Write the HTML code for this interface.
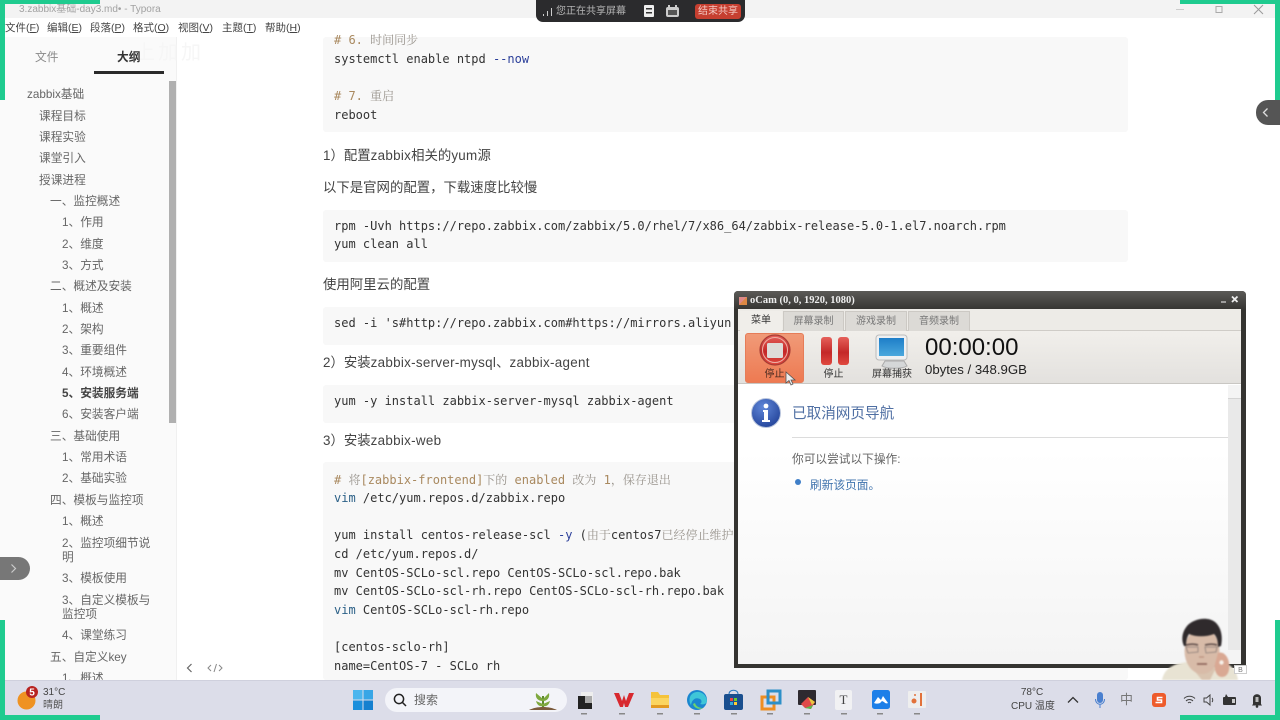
<!DOCTYPE html>
<html lang="zh"><head><meta charset="utf-8"><title>Typora</title>
<style>
*{box-sizing:border-box;margin:0;padding:0}
html{width:1280px;height:720px;overflow:hidden;background:#fff}
body{width:1280px;height:720px;overflow:hidden;background:#fff;position:relative;font-family:"Liberation Sans","Noto Sans CJK SC",sans-serif;color:#555;filter:blur(.35px)}
div,span.t{white-space:nowrap}
.t{position:absolute;line-height:18px;height:18px}
#side .t{font-size:11.7px;color:#666;margin-top:1px}
#menu .t{font-size:10.5px;color:#444}
#menu u{text-decoration:underline}
.c{position:absolute;left:334px;font:12px/18px "DejaVu Sans Mono","Noto Serif CJK SC",monospace;color:#333;height:18px}
.cm{color:#a9895f}
.cg{color:#9a958e}
.b{color:#2b3f9a}
.vb{color:#2a5f86}
.blk{position:absolute;left:323px;width:805px;background:#f8f8f8;border-radius:3px}
.p{position:absolute;left:323px;font-size:13.4px;line-height:18px;color:#444;margin-top:1px}
.p i{font-style:normal;letter-spacing:.3px}
.g{position:absolute;background:#1fcb8f;z-index:20}
.tab{position:absolute;top:311px;height:20px;background:#dcdad6;border:1px solid #ccc9c4;border-bottom:0;font-size:10px;line-height:20px;text-align:center;color:#777}
svg{position:absolute;overflow:visible}
</style></head><body>

<!-- title bar -->
<div style="position:absolute;left:0;top:0;width:1280px;height:18px;background:#f3f3f3"></div>
<div class="t" style="left:19px;top:1px;font-size:10px;color:#a2a2a2">3.zabbix基础-day3.md• - Typora</div>
<svg style="left:1176px;top:4px" width="96" height="12"><path d="M0 5.500h8" stroke="#ccc"/><rect x="40" y="2.500" width="6" height="6" fill="none" stroke="#aaa"/><path d="M78 1l9 9M87 1l-9 9" stroke="#999" fill="none"/></svg>

<!-- menu -->
<div id="menu">
<div class="t" style="left:5px;top:19px">文件(<u>F</u>)</div>
<div class="t" style="left:47px;top:19px">编辑(<u>E</u>)</div>
<div class="t" style="left:90px;top:19px">段落(<u>P</u>)</div>
<div class="t" style="left:133px;top:19px">格式(<u>O</u>)</div>
<div class="t" style="left:178px;top:19px">视图(<u>V</u>)</div>
<div class="t" style="left:222px;top:19px">主题(<u>T</u>)</div>
<div class="t" style="left:265px;top:19px">帮助(<u>H</u>)</div>
</div>

<!-- sidebar -->
<div style="position:absolute;left:0;top:37px;width:177px;height:643px;background:#fafafa;border-right:1px solid #f0f0f0"></div>
<div class="t" style="left:135px;top:41px;width:95px;height:24px;font-size:20px;line-height:24px;color:#f6f6f6;letter-spacing:3px;overflow:hidden">上加加</div>
<div id="side">
<div class="t" style="left:35px;top:48px;color:#8a8a8a">文件</div>
<div class="t" style="left:117px;top:48px;color:#333;font-weight:bold">大纲</div>
<div style="position:absolute;left:94px;top:71px;width:70px;height:3px;background:#2a2a2a"></div>
<div style="position:absolute;left:169px;top:81px;width:7px;height:342px;background:#b0b0b0"></div>
<div class="t" style="left:27px;top:85px">zabbix基础</div>
<div class="t" style="left:39px;top:107px">课程目标</div>
<div class="t" style="left:39px;top:128px">课程实验</div>
<div class="t" style="left:39px;top:149px">课堂引入</div>
<div class="t" style="left:39px;top:171px">授课进程</div>
<div class="t" style="left:50px;top:192px">一、监控概述</div>
<div class="t" style="left:62px;top:213px">1、作用</div>
<div class="t" style="left:62px;top:235px">2、维度</div>
<div class="t" style="left:62px;top:256px">3、方式</div>
<div class="t" style="left:50px;top:277px">二、概述及安装</div>
<div class="t" style="left:62px;top:299px">1、概述</div>
<div class="t" style="left:62px;top:320px">2、架构</div>
<div class="t" style="left:62px;top:341px">3、重要组件</div>
<div class="t" style="left:62px;top:363px">4、环境概述</div>
<div class="t" style="left:62px;top:384px;font-weight:bold;color:#444">5、安装服务端</div>
<div class="t" style="left:62px;top:405px">6、安装客户端</div>
<div class="t" style="left:50px;top:427px">三、基础使用</div>
<div class="t" style="left:62px;top:448px">1、常用术语</div>
<div class="t" style="left:62px;top:469px">2、基础实验</div>
<div class="t" style="left:50px;top:491px">四、模板与监控项</div>
<div class="t" style="left:62px;top:512px">1、概述</div>
<div class="t" style="left:62px;top:534px">2、监控项细节说</div>
<div class="t" style="left:62px;top:548px">明</div>
<div class="t" style="left:62px;top:569px">3、模板使用</div>
<div class="t" style="left:62px;top:591px">3、自定义模板与</div>
<div class="t" style="left:62px;top:605px">监控项</div>
<div class="t" style="left:62px;top:626px">4、课堂练习</div>
<div class="t" style="left:50px;top:648px">五、自定义key</div>
<div class="t" style="left:62px;top:669px;height:10px;overflow:hidden">1、概述</div>
</div>
<div style="position:absolute;left:0;top:557px;width:30px;height:23px;background:#777;border-radius:0 12px 12px 0"></div>
<svg style="left:0;top:557px" width="30" height="23"><path d="M11.500 7.500l4 4-4 4" stroke="#ccc" stroke-width="1.200" fill="none"/></svg>
<svg style="left:182px;top:662px" width="50" height="12"><path d="M9.500 2l-4 4 4 4" stroke="#666" stroke-width="1.200" fill="none"/><path d="M29 3l-3 3 3 3M37 3l3 3-3 3M34.500 2l-2.500 8" stroke="#888" fill="none"/></svg>

<!-- main content -->
<div class="blk" style="top:37px;height:95px"></div>
<div class="c cm" style="top:31px">#&nbsp;6.&nbsp;<span class="cg">时间同步</span></div>
<div class="c" style="top:50px">systemctl enable ntpd <span class="b">--now</span></div>
<div class="c cm" style="top:87px">#&nbsp;7.&nbsp;<span class="cg">重启</span></div>
<div class="c" style="top:106px">reboot</div>
<div class="p" style="top:146px">1）配置<i>zabbix</i>相关的<i>yum</i>源</div>
<div class="p" style="top:178px">以下是官网的配置，下载速度比较慢</div>
<div class="blk" style="top:210px;height:52px"></div>
<div class="c" style="top:217px">rpm -Uvh https://repo.zabbix.com/zabbix/5.0/rhel/7/x86_64/zabbix-release-5.0-1.el7.noarch.rpm</div>
<div class="c" style="top:235px">yum clean all</div>
<div class="p" style="top:275px">使用阿里云的配置</div>
<div class="blk" style="top:307px;height:38px"></div>
<div class="c" style="top:314px">sed -i 's#http://repo.zabbix.com#https://mirrors.aliyun.com/zabbix#' /etc/yum.repos.d/zabbix.repo</div>
<div class="p" style="top:353px">2）安装<i>zabbix-server-mysql</i>、<i>zabbix-agent</i></div>
<div class="blk" style="top:385px;height:38px"></div>
<div class="c" style="top:392px">yum -y install zabbix-server-mysql zabbix-agent</div>
<div class="p" style="top:431px">3）安装<i>zabbix-web</i></div>
<div class="blk" style="top:462px;height:218px"></div>
<div class="c cm" style="top:471px">#&nbsp;<span class="cg">将</span>[zabbix-frontend]<span class="cg">下的</span>&nbsp;enabled&nbsp;<span class="cg">改为</span>&nbsp;1<span class="cg">，保存退出</span></div>
<div class="c" style="top:489px"><span class="vb">vim</span> /etc/yum.repos.d/zabbix.repo</div>
<div class="c" style="top:526px">yum install centos-release-scl <span class="b">-y</span> (<span class="cg">由于</span>centos7<span class="cg">已经停止维护，需要更换源</span>)</div>
<div class="c" style="top:545px">cd /etc/yum.repos.d/</div>
<div class="c" style="top:564px">mv CentOS-SCLo-scl.repo CentOS-SCLo-scl.repo.bak</div>
<div class="c" style="top:582px">mv CentOS-SCLo-scl-rh.repo CentOS-SCLo-scl-rh.repo.bak</div>
<div class="c" style="top:601px"><span class="vb">vim</span> CentOS-SCLo-scl-rh.repo</div>
<div class="c" style="top:638px">[centos-sclo-rh]</div>
<div class="c" style="top:657px">name=CentOS-7 - SCLo rh</div>

<!-- right bubble -->
<div style="position:absolute;left:1256px;top:100px;width:24px;height:25px;background:#555;border-radius:12px 0 0 12px"></div>
<svg style="left:1256px;top:100px" width="24" height="25"><path d="M11.500 8.500l-4 4 4 4" stroke="#ddd" stroke-width="1.300" fill="none"/></svg>

<!-- share bar -->
<div style="position:absolute;left:536px;top:0;width:209px;height:22px;background:#2b2b2d;border-radius:0 0 7px 7px"></div>
<svg style="left:542px;top:7px" width="14" height="10"><path d="M1.500 9V7M5.500 9V4M9.500 9V1" stroke="#ccc" fill="none"/></svg>
<div class="t" style="left:556px;top:3px;font-size:10px;color:#b5b5b5">您正在共享屏幕</div>
<svg style="left:643px;top:4px" width="40" height="14"><rect x="1" y="1" width="10" height="12" rx="1" fill="#eee"/><rect x="3" y="4" width="6" height="1.500" fill="#333"/><rect x="3" y="8" width="6" height="1.500" fill="#333"/><rect x="23" y="3" width="13" height="10" rx="2" fill="#ccc"/><rect x="25" y="1" width="2" height="3" fill="#ccc"/><rect x="32" y="1" width="2" height="3" fill="#ccc"/><rect x="25" y="6" width="9" height="5" fill="#555"/></svg>
<div style="position:absolute;left:695px;top:4px;width:46px;height:15px;background:#c63f30;border-radius:3px;color:#f3c9c3;font-size:10px;line-height:15px;text-align:center">结束共享</div>

<!-- oCam window -->
<div style="position:absolute;left:734px;top:291px;width:512px;height:377px;background:#353431;border-radius:4px 4px 0 0;z-index:3">
<div style="position:absolute;left:0;top:0;width:512px;height:18px;background:linear-gradient(#5b5a57,#373633);border-radius:4px 4px 0 0"></div>
</div>
<div style="position:absolute;left:738px;top:309px;width:503px;height:355px;background:linear-gradient(#fff 40%,#f4f4f4);z-index:3"></div>
<div style="position:absolute;left:738px;top:309px;width:503px;height:22px;background:#edebe7;border-bottom:1px solid #cfccc7;z-index:3"></div>
<div style="position:absolute;left:738px;top:331px;width:503px;height:53px;background:linear-gradient(#f1efeb,#e3e1de);border-bottom:1px solid #c9c7c3;z-index:3"></div>
<div style="z-index:4;position:absolute;left:0;top:0;width:1280px;height:720px">
<div style="position:absolute;left:739px;top:297px;width:8px;height:8px;background:linear-gradient(135deg,#d88 50%,#d84 50%)"></div>
<div class="t" style="left:750px;top:292px;font:bold 10.500px/18px 'Liberation Serif',serif;color:#eee">oCam (0, 0, 1920, 1080)</div>
<svg style="left:1218px;top:295px" width="22" height="10"><path d="M3 7h5" stroke="#bbb" stroke-width="1.500"/><path d="M14 1.500l5.500 5.500M19.500 1.500l-5.500 5.500" stroke="#eee" stroke-width="1.800" fill="none"/></svg>
<div class="t" style="left:740px;top:311px;width:42px;height:20px;text-align:center;font-size:10px;line-height:20px;color:#333;background:#f0eeea">菜单</div>
<div class="tab" style="left:783px;width:61px">屏幕录制</div>
<div class="tab" style="left:845px;width:62px">游戏录制</div>
<div class="tab" style="left:908px;width:62px">音频录制</div>
<div style="position:absolute;left:745px;top:333px;width:59px;height:50px;border-radius:3px;background:linear-gradient(#f09a78,#ee7a52);border:1px solid #e67c58"></div>
<svg style="left:745px;top:333px" width="260" height="50">
<defs><linearGradient id="rd" x1="0" y1="0" x2="0" y2="1"><stop offset="0" stop-color="#e5605a"/><stop offset=".55" stop-color="#c42828"/><stop offset="1" stop-color="#e0493f"/></linearGradient>
<linearGradient id="sc" x1="0" y1="0" x2="0" y2="1"><stop offset="0" stop-color="#1e7ec8"/><stop offset="1" stop-color="#4aa8dd"/></linearGradient></defs>
<circle cx="30" cy="17" r="15" fill="url(#rd)" stroke="#a83c34" stroke-width="1.200"/>
<circle cx="30" cy="17" r="12.500" fill="none" stroke="#efb0a4"/>
<rect x="22" y="10" width="16" height="15" rx="1.500" fill="#dedcd8"/>
<rect x="76" y="4" width="11" height="28" rx="3" fill="url(#rd)"/>
<rect x="93" y="4" width="11" height="28" rx="3" fill="url(#rd)"/>
<rect x="131" y="2" width="31" height="25" rx="3" fill="#eef0f2" stroke="#bbb"/>
<rect x="134" y="5" width="25" height="18" fill="url(#sc)"/>
<path d="M140 28h19l3 5c-5 3-20 3-25 0z" fill="#d5d7d8" stroke="#aaa"/>
</svg>
<div class="t" style="left:745px;top:366px;width:59px;text-align:center;font-size:10px;color:#4a2a20">停止</div>
<div class="t" style="left:804px;top:366px;width:59px;text-align:center;font-size:10px;color:#333">停止</div>
<div class="t" style="left:862px;top:366px;width:60px;text-align:center;font-size:10px;color:#333">屏幕捕获</div>
<div class="t" style="left:925px;top:334px;font-size:24px;line-height:28px;height:28px;color:#111">00:00:00</div>
<div class="t" style="left:925px;top:361px;font-size:13.200px;color:#222">0bytes / 348.9GB</div>
<svg style="left:784px;top:371px" width="12" height="16"><path d="M2 1v11l3-2.500 2 4.500 2-1-2-4h4z" fill="#eee" stroke="#555" stroke-width=".8"/></svg>
<svg style="left:751px;top:398px" width="30" height="30"><defs><radialGradient id="ic" cx=".4" cy=".3" r=".8"><stop offset="0" stop-color="#5f86d8"/><stop offset="1" stop-color="#1f3f95"/></radialGradient></defs><circle cx="15" cy="15" r="14.500" fill="url(#ic)" stroke="#b8c4dc"/><circle cx="15" cy="8" r="2.400" fill="#fff"/><path d="M12 12h5v10h2v2h-8v-2h2v-8h-1z" fill="#fff"/></svg>
<div class="t" style="left:792px;top:405px;font-size:14.600px;color:#4f6fa3">已取消网页导航</div>
<div style="position:absolute;left:792px;top:437px;width:436px;height:1px;background:#dcdcdc"></div>
<div class="t" style="left:792px;top:451px;font-size:11.700px;color:#666">你可以尝试以下操作:</div>
<div style="position:absolute;left:795px;top:479px;width:6px;height:6px;border-radius:50%;background:#3f7fc8"></div>
<div class="t" style="left:810px;top:477px;font-size:11.700px;color:#3f73ad">刷新该页面。</div>
<div style="position:absolute;left:1228px;top:385px;width:13px;height:279px;background:#f4f4f4"></div>
<div style="position:absolute;left:1228px;top:398px;width:13px;height:252px;background:#e9e9e9;border-top:1px solid #d4d4d4"></div>
</div>

<!-- webcam -->
<svg style="left:1150px;top:610px;z-index:5;filter:blur(.8px)" width="110" height="70" viewBox="0 0 110 70">
<path d="M12 70c2-9 7-13 15-16l14-3 18 8 16-6c8 3 12 9 13 17z" fill="#e8e3d3"/>
<path d="M42 58l10 12h8l6-12z" fill="#d9c4b0"/>
<ellipse cx="52" cy="41" rx="17.500" ry="23" fill="#d8bba8"/>
<path d="M34 36c-3-6-2-14 3-20 6-7 20-10 28-4 6 5 8 14 6 24l-3 1c0-6-1-10-4-13-8 3-18 3-25 0-2 3-3 7-3 12z" fill="#2f2a2c"/>
<path d="M36 35c4-1 9-1 12 0M55 35c4-1 9-1 12 0" stroke="#5d4b48" stroke-width="1.500" fill="none"/>
<path d="M36 37l12 0 0 5-10 1zM55 37h12l-1 5-10 1z" fill="none" stroke="#8a7d78" stroke-width=".8"/>
<path d="M47 54h10" stroke="#8c6257" stroke-width="1.600"/>
<path d="M49 47l5 0" stroke="#b98f7c" stroke-width="1.200"/>
<path d="M68 43c5-2 10 3 11 10s-1 14-7 14c-5 0-8-6-7-13z" fill="#d9a893"/>
<circle cx="71.500" cy="52.500" r="2.200" fill="#f6f1ea"/>
</svg>
<div class="t" style="left:1234px;top:665px;width:13px;height:9px;font-size:7px;line-height:9px;color:#777;background:#fff;border:1px solid #ccc;z-index:5;text-align:center">B</div>

<!-- taskbar -->
<div style="position:absolute;left:0;top:680px;width:1280px;height:40px;background:#dcdde9;border-top:1px solid #cfd0dd;z-index:6"></div>
<div style="position:absolute;left:0;top:0;width:1280px;height:720px;z-index:7">
<svg style="left:17px;top:684px" width="24" height="28"><circle cx="9.500" cy="16.500" r="9" fill="#ef9222"/><circle cx="15" cy="8" r="6" fill="#b82320"/><text x="15" y="11.500" font-size="10" font-weight="bold" text-anchor="middle" fill="#fff" font-family="Liberation Sans">5</text></svg>
<div class="t" style="left:43px;top:684px;font-size:10px;color:#444">31°C</div>
<div class="t" style="left:43px;top:697px;font-size:10px;color:#555">晴朗</div>
<svg style="left:353px;top:690px" width="20" height="20"><rect x="0" y="0" width="9.500" height="9.500" fill="#4cb6ee"/><rect x="10.500" y="0" width="9.500" height="9.500" fill="#38a6e6"/><rect x="0" y="10.500" width="9.500" height="9.500" fill="#1b8fdc"/><rect x="10.500" y="10.500" width="9.500" height="9.500" fill="#1580cf"/></svg>
<div style="position:absolute;left:385px;top:688px;width:182px;height:24px;border-radius:12px;background:#f3f4f9"></div>
<svg style="left:393px;top:693px" width="14" height="14"><circle cx="6" cy="6" r="4.600" fill="none" stroke="#222" stroke-width="1.500"/><path d="M9.500 9.500l3.500 3.500" stroke="#222" stroke-width="1.500"/></svg>
<div class="t" style="left:414px;top:691px;font-size:12px;color:#666">搜索</div>
<svg style="left:528px;top:690px" width="30" height="22"><path d="M15 17V6" stroke="#5c8a2e" stroke-width="2"/><path d="M15 9L8 3c-1 5 2 8 7 8zM15 9l6-6c1 5-2 8-6 8zM15 14l-7-3c1 4 4 6 7 5zM15 14l7-3c-1 4-4 6-7 5z" fill="#7ea83e"/><path d="M1 20c8-4 20-4 28 0z" fill="#7a5a3c"/></svg>
<svg style="left:577px;top:691px" width="16" height="18"><rect x="4" y="1" width="12" height="12" fill="#eee"/><rect x="1" y="5" width="14" height="13" fill="#222"/><rect x="8" y="5" width="7" height="7" fill="#aaa"/></svg>
<svg style="left:614px;top:692px" width="20" height="16"><path d="M0 1h5l3 8 2-6 2 6 3-8h5l-6 14h-3l-1-4-1 4H6z" fill="#d8282f"/></svg>
<svg style="left:650px;top:690px" width="20" height="20"><path d="M1 2h7l2 3h9v13H1z" fill="#f5c33b"/><rect x="1" y="8" width="18" height="10" fill="#fbd560"/><rect x="1" y="15" width="18" height="3" fill="#e39a21"/></svg>
<svg style="left:687px;top:690px" width="20" height="20"><circle cx="10" cy="10" r="10" fill="#1b86cf"/><path d="M4 5c5-6 15-3 16 6 0 3-4 4-7 3 2-1 2-4 0-5-4-2-8 0-9 6-2-3-2-7 0-10z" fill="#3fc6d8"/><path d="M6 14c1 4 6 6 10 4-3 0-7-1-8-5z" fill="#6fd46a"/></svg>
<svg style="left:724px;top:690px" width="19" height="20"><rect x="0" y="4" width="19" height="16" rx="2" fill="#1a4f8f"/><path d="M5 4c0-5 9-5 9 0" stroke="#2878c0" fill="none"/><rect x="6" y="8" width="3" height="3" fill="#e44"/><rect x="10" y="8" width="3" height="3" fill="#6c3"/><rect x="6" y="12" width="3" height="3" fill="#3ad"/><rect x="10" y="12" width="3" height="3" fill="#fc3"/></svg>
<svg style="left:761px;top:690px" width="20" height="20"><rect x="1" y="7" width="12" height="12" fill="none" stroke="#ee8e22" stroke-width="3"/><rect x="7" y="1" width="12" height="12" fill="none" stroke="#2d8fc8" stroke-width="3"/></svg>
<svg style="left:798px;top:690px" width="19" height="20"><rect width="18" height="15" rx="1" fill="#2e2a30"/><path d="M3 14l7-7 7 5-4 7-6-1z" fill="#e04a4a"/><path d="M10 7l7 5-3 3z" fill="#e8c840"/><path d="M7 18l6 1 2-4z" fill="#5bb84a"/></svg>
<div class="t" style="left:835px;top:690px;width:17px;height:20px;background:#f1f1f3;border-radius:2px;font:13px/20px 'Liberation Serif',serif;text-align:center;color:#444">T</div>
<svg style="left:872px;top:690px" width="18" height="20"><rect width="18" height="19" rx="2.500" fill="#1d7fe8"/><path d="M2 13l4-6 3 3 2-4 5 7c-2 1-3 0-4-1l-2-1-1 1c-1 2-5 2-7 1z" fill="#fff"/></svg>
<svg style="left:908px;top:691px" width="18" height="18"><rect width="18" height="17" rx="1" fill="#eee"/><circle cx="6" cy="10" r="2.500" fill="#e2713a"/><circle cx="7" cy="4" r="1" fill="#e2713a"/><rect x="12" y="2" width="2" height="13" fill="#e2713a"/></svg>
<svg style="left:0;top:680px" width="1280" height="40"><g fill="#888"><rect x="581" y="33" width="6" height="1.500"/><rect x="619" y="33" width="6" height="1.500"/><rect x="657" y="33" width="6" height="1.500"/><rect x="694" y="33" width="6" height="1.500"/><rect x="731" y="33" width="6" height="1.500"/><rect x="767" y="33" width="6" height="1.500"/><rect x="804" y="33" width="6" height="1.500"/><rect x="841" y="33" width="6" height="1.500"/><rect x="877" y="33" width="6" height="1.500"/><rect x="914" y="33" width="6" height="1.500"/></g></svg>
<div class="t" style="left:1011px;top:684px;width:42px;font-size:10px;text-align:center;color:#444">78°C</div>
<div class="t" style="left:1011px;top:698px;width:42px;font-size:10px;text-align:center;color:#444">CPU 温度</div>
<svg style="left:1067px;top:696px" width="12" height="8"><path d="M1 6.500l5-5 5 5" stroke="#333" stroke-width="1.300" fill="none"/></svg>
<svg style="left:1095px;top:692px" width="10" height="17"><rect x="2" y="0" width="6" height="11" rx="3" fill="#4a80cf"/><path d="M0.500 7c0 7 9 7 9 0M5 12v4" stroke="#4a80cf" fill="none"/></svg>
<div class="t" style="left:1120px;top:691px;font-size:13px;color:#777">中</div>
<svg style="left:1152px;top:693px" width="14" height="14"><rect width="14" height="14" rx="3" fill="#ee5b2b"/><path d="M10.500 4.500H5.500v2.500h4v2.500H3.500" stroke="#fff" stroke-width="1.600" fill="none"/></svg>
<svg style="left:1183px;top:695px" width="13" height="10"><path d="M1 3.500c3-3 8-3 11 0M3 6c2-2 5-2 7 0M5 8c1-1 2-1 3 0" stroke="#444" fill="none"/></svg>
<svg style="left:1203px;top:694px" width="12" height="12"><path d="M1 4h2.500L7 1v10L3.500 8H1z" fill="none" stroke="#444"/><path d="M9 4c1 1 1 3 0 4" stroke="#444" fill="none"/></svg>
<svg style="left:1223px;top:694px" width="14" height="12"><rect x="0" y="3" width="13" height="8" rx="1" fill="#333"/><path d="M3 0l2 3H2z" fill="#333"/><rect x="9" y="5" width="3" height="4" fill="#ccc"/></svg>
<svg style="left:1251px;top:692px" width="12" height="16"><path d="M2 12V6c0-5 8-5 8 0v6l1 1.500H1z" fill="#333"/><circle cx="6" cy="14.500" r="1.300" fill="#333"/><rect x="4.500" y="5" width="3" height="5" fill="#bbb"/></svg>
</div>

<!-- green corner markers -->
<div class="g" style="left:0;top:0;width:100px;height:4px"></div>
<div class="g" style="left:0;top:0;width:5px;height:100px"></div>
<div class="g" style="left:1180px;top:0;width:100px;height:4px"></div>
<div class="g" style="left:1275px;top:0;width:5px;height:100px"></div>
<div class="g" style="left:0;top:620px;width:5px;height:100px"></div>
<div class="g" style="left:0;top:715px;width:100px;height:5px"></div>
<div class="g" style="left:1275px;top:620px;width:5px;height:100px"></div>
<div class="g" style="left:1180px;top:715px;width:100px;height:5px"></div>
</body></html>
